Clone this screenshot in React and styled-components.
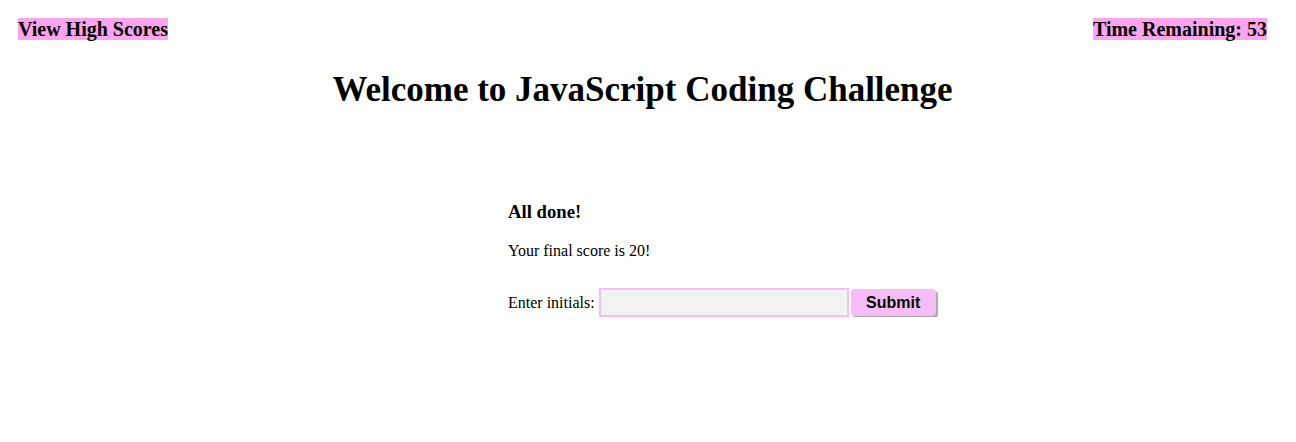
import React, { useState } from 'react';
import styled, { createGlobalStyle } from 'styled-components';

const GlobalStyle = createGlobalStyle`
  body {
    margin: 0;
    font-family: "Liberation Serif", "Times New Roman", serif;
    background: #fff;
    color: #000;
  }
`

const Page = styled.div`
  padding: 18px 29px 0 18px;
`

const TopBar = styled.header`
  display: flex;
  justify-content: space-between;
  align-items: flex-start;
`

const Tag = styled.span`
  background: #fda4ee;
  font-size: 20px;
  font-weight: bold;
  line-height: 22px;
`

const Title = styled.h1`
  margin: 30px 0 0;
  text-align: center;
  font-size: 35px;
  line-height: 40px;
`

const Quiz = styled.section`
  display: flex;
  flex-direction: column;
  align-items: flex-start;
  margin: 91px 0 0 490px;
`

const DoneTitle = styled.h3`
  margin: 0;
  font-size: 18.72px;
  line-height: 22px;
`

const Score = styled.p`
  margin: 19px 0 0;
  font-size: 16px;
  line-height: 18px;
`

const Form = styled.form`
  display: flex;
  align-items: center;
  margin-top: 28px;
  font-size: 16px;
`

const Label = styled.label`
  margin-right: 4px;
`

const Input = styled.input`
  width: 250px;
  height: 29px;
  box-sizing: border-box;
  border: 2px solid #f6bdf6;
  background: #f2f2f2;
  outline: none;
`

const Button = styled.button`
  margin-left: 2px;
  width: 85px;
  height: 27px;
  border: none;
  border-radius: 4px;
  background: #f6bdf6;
  box-shadow: 2px 2px 1px #a8a8a8;
  font-family: "Liberation Sans", Arial, sans-serif;
  font-weight: bold;
  font-size: 16px;
  color: #000;
  cursor: pointer;
`

export default function App() {
  const [initials, setInitials] = useState('');

  return (
    <Page>
      <GlobalStyle />
      <TopBar>
        <Tag>View High Scores</Tag>
        <Tag>Time Remaining: 53</Tag>
      </TopBar>

      <Title>Welcome to JavaScript Coding Challenge</Title>

      <Quiz>
        <DoneTitle>All done!</DoneTitle>
        <Score>Your final score is 20!</Score>
        <Form onSubmit={(e) => e.preventDefault()}>
          <Label htmlFor="initials">Enter initials:</Label>
          <Input id="initials" value={initials} onChange={(e) => setInitials(e.target.value)} />
          <Button type="submit">Submit</Button>
        </Form>
      </Quiz>
    </Page>
  );
}
